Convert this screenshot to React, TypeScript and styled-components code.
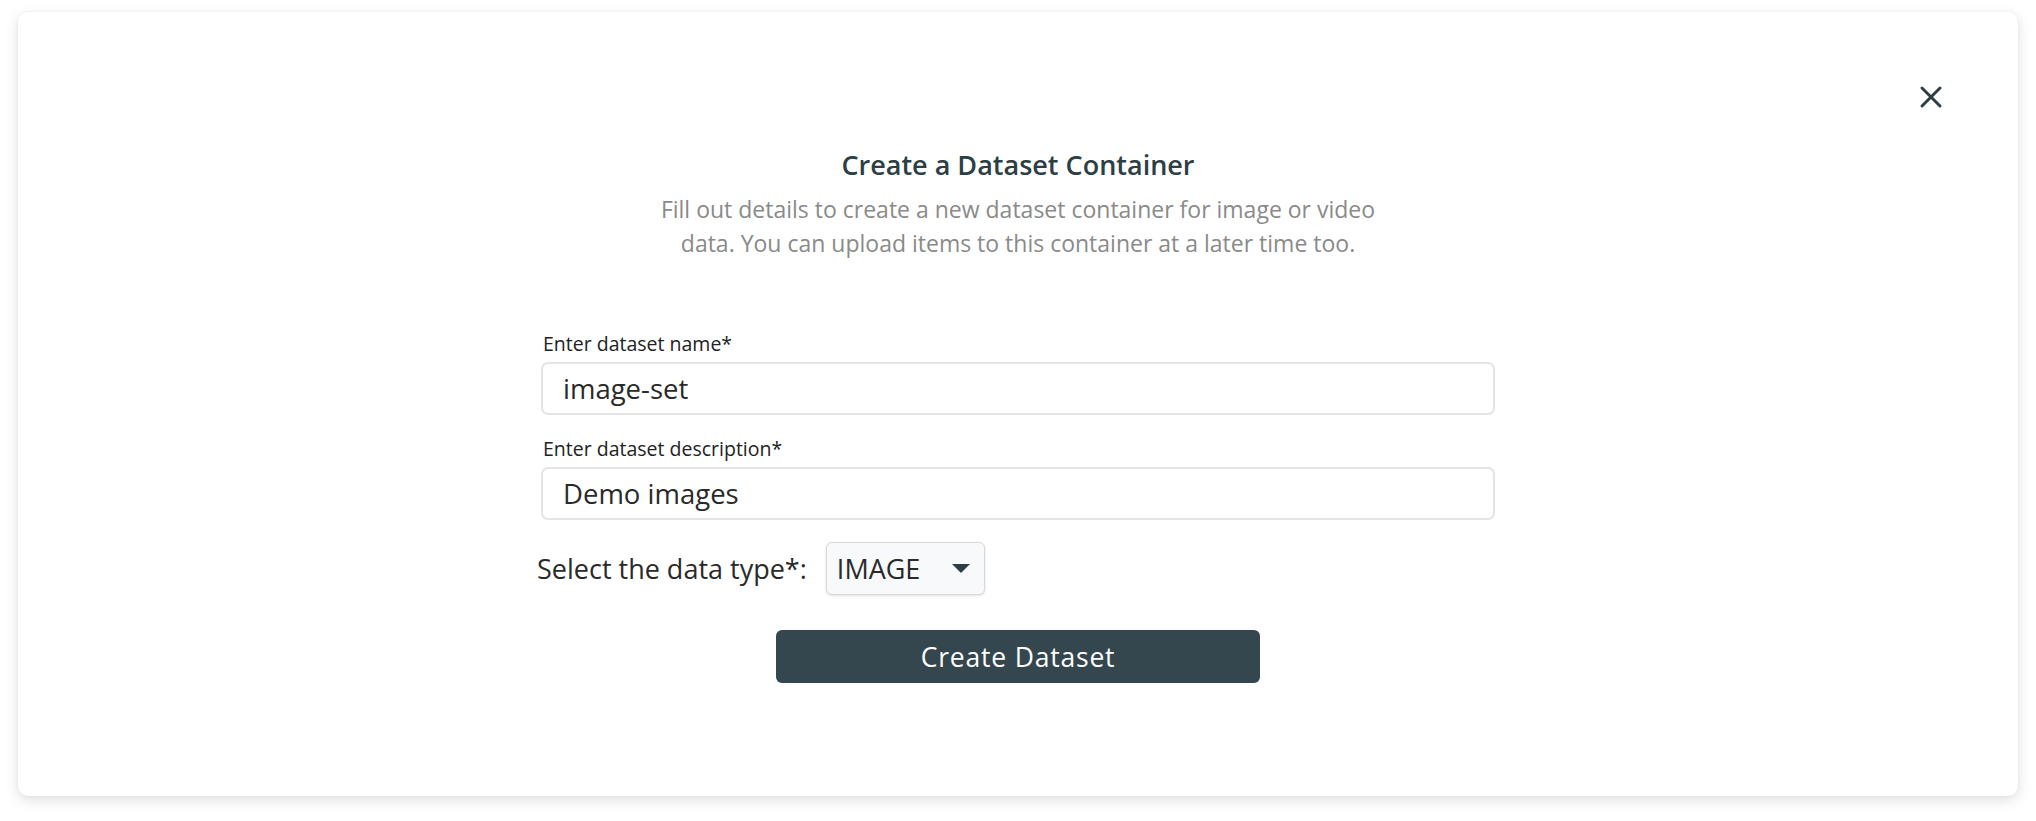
import styled, { createGlobalStyle } from "styled-components";

const GlobalStyle = createGlobalStyle`
  html, body {
    margin: 0;
    padding: 0;
    background: #ffffff;
    font-family: "Open Sans", "Noto Sans", sans-serif;
  }
  * {
    box-sizing: border-box;
  }
`;

const Page = styled.div`
  width: 2036px;
  height: 821px;
  padding: 12px 18px 25px 18px;
`;

const Card = styled.div`
  position: relative;
  height: 784px;
  background: #fff;
  border-radius: 10px;
  box-shadow: 0 4px 14px rgba(0, 0, 0, 0.13), 0 0 3px rgba(0, 0, 0, 0.05);
  display: flex;
  flex-direction: column;
  align-items: center;
  padding-top: 135px;
`;

const CloseButton = styled.button`
  position: absolute;
  top: 72px;
  right: 74px;
  width: 26px;
  height: 26px;
  padding: 0;
  border: none;
  background: transparent;
  cursor: pointer;
  display: flex;
  align-items: center;
  justify-content: center;
`;

const Title = styled.h2`
  margin: 0;
  font-size: 27px;
  line-height: 36px;
  font-weight: 600;
  color: #2d3e45;
`;

const Subtitle = styled.p`
  margin: 9px 0 0 0;
  max-width: 760px;
  text-align: center;
  font-size: 23px;
  line-height: 34px;
  color: #8a8a8a;
`;

const Form = styled.div`
  width: 954px;
  margin-top: 72px;
  display: flex;
  flex-direction: column;
`;

const Field = styled.div`
  display: flex;
  flex-direction: column;
  gap: 6px;
  margin-bottom: 22px;
`;

const Label = styled.label`
  padding-left: 2px;
  font-size: 19.5px;
  line-height: 24px;
  color: #222;
`;

const TextInput = styled.input`
  width: 100%;
  height: 53px;
  padding: 0 20px;
  border: 2px solid #e4e4e4;
  border-radius: 7px;
  font-family: inherit;
  font-size: 27.5px;
  color: #2a2a2a;
  background: #fff;
  outline: none;
`;

const SelectRow = styled.div`
  display: flex;
  align-items: center;
  gap: 19px;
  margin-left: -4px;
`;

const SelectLabel = styled.span`
  font-size: 27px;
  color: #2a2a2a;
`;

const SelectBox = styled.div`
  width: 159px;
  height: 53px;
  display: flex;
  align-items: center;
  justify-content: space-between;
  padding: 0 14px 0 10px;
  border: 1px solid #d8d8d8;
  border-radius: 6px;
  background: #f8f9fa;
  box-shadow: 0 1px 3px rgba(0, 0, 0, 0.12);
  font-size: 27px;
  color: #2a2a2a;
`;

const SubmitButton = styled.button`
  align-self: center;
  width: 484px;
  height: 53px;
  margin-top: 35px;
  border: none;
  border-radius: 6px;
  background: #34474f;
  color: #fff;
  font-family: inherit;
  font-size: 26.5px;
  letter-spacing: 0.8px;
  cursor: pointer;
`;

function App() {
  return (
    <>
      <GlobalStyle />
      <Page>
        <Card>
          <CloseButton aria-label="Close">
            <svg width="24" height="24" viewBox="0 0 24 24">
              <path
                d="M3 3 L21 21 M21 3 L3 21"
                stroke="#2d3e45"
                strokeWidth="3"
                strokeLinecap="round"
              />
            </svg>
          </CloseButton>
          <Title>Create a Dataset Container</Title>
          <Subtitle>
            Fill out details to create a new dataset container for image or
            video data. You can upload items to this container at a later time
            too.
          </Subtitle>
          <Form>
            <Field>
              <Label>Enter dataset name*</Label>
              <TextInput readOnly value="image-set" />
            </Field>
            <Field>
              <Label>Enter dataset description*</Label>
              <TextInput readOnly value="Demo images" />
            </Field>
            <SelectRow>
              <SelectLabel>Select the data type*:</SelectLabel>
              <SelectBox>
                IMAGE
                <svg width="18" height="9" viewBox="0 0 18 9">
                  <path d="M0 0 H18 L9 9 Z" fill="#2d3e45" />
                </svg>
              </SelectBox>
            </SelectRow>
            <SubmitButton>Create Dataset</SubmitButton>
          </Form>
        </Card>
      </Page>
    </>
  );
}

export default App;
